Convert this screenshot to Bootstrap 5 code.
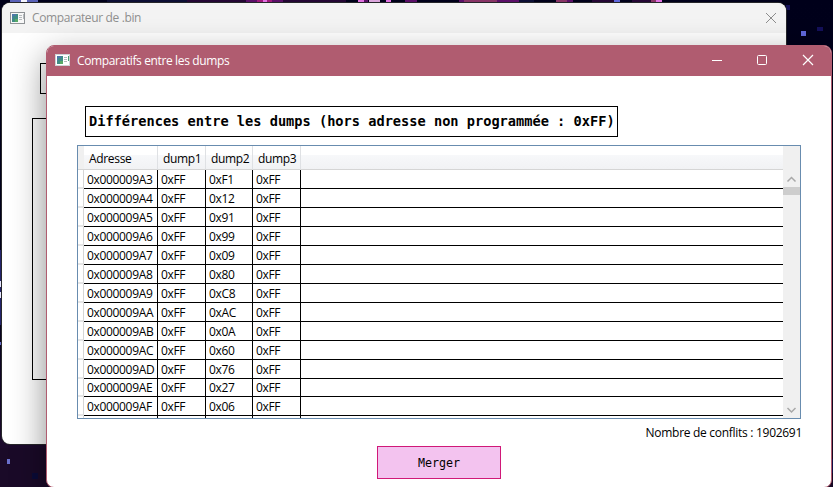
<!DOCTYPE html>
<html lang="fr">

<head>
  <meta charset="UTF-8">
  <meta name="viewport" content="width=device-width, initial-scale=1.0">
  <title>Comparatifs entre les dumps</title>
  <!-- Bootstrap CSS -->
  <link href="https://cdn.jsdelivr.net/npm/bootstrap@5.3.3/dist/css/bootstrap.min.css" rel="stylesheet">
  <!-- Custom CSS -->
  <style>
    body {
      width: 833px;
      height: 487px;
      background: linear-gradient(#00001a 0, #02021c 60%, #1c0a2c 92%);
      color: #000;
      font-family: "Open Sans", "Noto Sans", sans-serif;
      font-size: 12px;
      line-height: 16px;
      letter-spacing: -.33px;
    }

    /* Desktop windows */
    .win {
      border-radius: 8px;
      background: #fff;
    }

    .win-back {
      left: 2px;
      top: 3px;
      width: 784px;
      height: 441px;
      box-shadow: 0 0 0 1px #26262a;
    }

    .win-front {
      left: 46px;
      top: 45px;
      width: 786px;
      height: 443px;
      border: 1px solid #b05c70;
      box-shadow: 0 12px 34px rgba(0, 0, 0, .46);
    }

    .titlebar {
      height: 30px;
      padding-left: 8px;
    }

    .win-back .titlebar {
      background: #f3f3f3;
      color: #8f8f8f;
    }

    .win-front .titlebar {
      background: #b05c70;
      color: #fff;
    }

    .titlebar span {
      margin-left: 7px;
      white-space: nowrap;
    }

    .win-back .titlebar span {
      letter-spacing: -.36px;
    }

    .win-front .titlebar span {
      letter-spacing: -.37px;
    }

    .win-front .app-icon {
      margin-bottom: 2px;
    }

    .win-front .titlebar span {
      margin-left: 7px;
    }

    .ghost-box {
      border: 1px solid #000;
    }

    .heading-box {
      margin: 30px 0 0 38px;
      width: 533px;
      height: 31px;
      padding-left: 3px;
      border: 1px solid #000;
      font: bold 13.65px/29px "DejaVu Sans Mono", monospace;
      letter-spacing: 0;
      white-space: pre;
    }

    /* Data grid */
    .dump-grid {
      margin: 8px 0 0 30px;
      width: 724px;
      height: 274px;
      border: 1px solid #688caf;
    }

    .dump-table {
      width: 705px;
      table-layout: fixed;
      border-collapse: separate;
      border-spacing: 0;
    }

    .dump-table th {
      height: 24px;
      padding: 2px 0 0 5px;
      font-weight: normal;
      background: linear-gradient(#fff 0, #fff 40%, #f7f8fa 41%, #f1f2f4 100%);
      border-right: 1px solid #dfe1e4;
      border-bottom: 1px solid #d5d5d5;
    }

    .dump-table th:first-child {
      background: #f0f0f0;
      border-right: 0;
    }

    .dump-table th:last-child,
    .dump-table td:last-child {
      border-right: 0;
    }

    .dump-table td {
      height: 19px;
      padding: 1px 0 0 3px;
      line-height: 17px;
      border-right: 1px solid #000;
      border-bottom: 1px solid #000;
      white-space: nowrap;
    }

    .dump-table td:first-child {
      padding: 0;
      border-right: 1px solid #d5d5d5;
      border-bottom: 2px solid #e6e6e6;
    }

    .dump-table tr.short td {
      height: 18px;
      padding-top: 0;
    }

    .scroll-col {
      width: 17px;
      background: #f0f0f0;
      padding: 29px 0 4px;
    }

    .thumb {
      height: 8px;
      margin-top: 4px;
      background: #cdcdcd;
    }

    .conflicts {
      margin: 6px 29px 0 0;
      letter-spacing: -.29px;
    }

    .btn-merge {
      width: 124px;
      height: 33px;
      margin: 5px 0 0 330px;
      padding: 1px 0 0;
      border: 1px solid #d01878;
      border-radius: 0;
      background: #f3c3ef;
      color: #000;
      font: 11.67px/30px "DejaVu Sans Mono", monospace;
      letter-spacing: 0;
    }
  </style>
</head>

<body class="position-relative overflow-hidden">

  <!-- Pixel wallpaper -->
  <svg class="position-absolute top-0 start-0" width="833" height="487" shape-rendering="crispEdges">
    <path fill="#5a62b8" d="M10 0h11v3H10zM27 0h11v3H27z" />
    <path fill="#f4f4ff" d="M21 0h6v3h-6z" />
    <path fill="#0c0e34" d="M107 0h80v3h-80zM519 0h15v3h-15z" />
    <path fill="#240634" d="M187 0h59v3h-59zM283 0h63v3h-63zM592 0h22v3h-22zM632 0h20v3h-20z" />
    <path fill="#5b0f68" d="M246 0h37v3h-37zM364 0h4v3h-4zM405 0h12v3h-12zM459 0h60v3h-60zM567 0h6v3h-6z" />
    <path fill="#a0187c" d="M257 0h15v3h-15z" />
    <path fill="#e070e0" d="M263 0h4v3h-4zM358 0h6v3h-6zM386 0h5v3h-5zM656 0h6v3h-6z" />
    <path fill="#dba6dc" d="M369 0h11v3h-11z" />
    <path fill="#883466" d="M464 0h33v3h-33zM556 0h11v3h-11zM651 0h5v3h-5z" />
    <path fill="#6068dc" d="M614 0h6v3h-6zM801 31h5v5h-5z" />
    <path fill="#14105a" d="M817 27h6v4h-6zM786 5h4v5h-4zM832 459h1v14h-1z" />
    <path fill="#24246c" d="M0 250h2v75H0z" />
    <path fill="#e8e8ff" d="M0 281h2v6H0zM0 292h2v6H0z" />
    <path fill="#1a0a28" d="M0 448h47v39H0z" />
    <path fill="#6a70cc" d="M0 342h1v3H0zM7 459h3v5H7z" />
    <path fill="#0b0b38" d="M32 473h6v6h-6z" />
  </svg>

  <!-- Main window, behind -->
  <div class="win win-back position-absolute overflow-hidden">
    <div class="titlebar d-flex align-items-center">
      <svg width="15" height="12" shape-rendering="crispEdges">
        <path fill="#8f9396" d="M0 0h15v12H0z" />
        <path fill="#f8f8f8" d="M1 1h13v10H1z" />
        <path fill="#3f8c84" d="M2 2h6v8H2z" />
        <path fill="#4d78a8" d="M2 2h4v2H2zM2 4h1v3H2z" />
        <path fill="#58a866" d="M5 7h3v3H5z" />
        <path fill="#b5babd" d="M9 3h3v1H9zM9 5h3v1H9zM9 7h3v1H9zM13 2h1v5h-1z" />
      </svg>
      <span>Comparateur de .bin</span>
      <svg class="ms-auto me-2" width="13" height="13" fill="none" stroke="#8c8c8c">
        <path d="M1 1l10 10M11 1l-10 10" />
      </svg>
    </div>
    <div class="ghost-box" style="margin:30px 60px 0 38px;height:31px"></div>
    <div class="ghost-box" style="margin:24px 60px 0 30px;height:262px"></div>
  </div>

  <!-- Comparison window -->
  <div class="win win-front position-absolute overflow-hidden">
    <div class="titlebar d-flex align-items-center">
      <svg class="app-icon" width="15" height="12" shape-rendering="crispEdges">
        <path fill="#cfd3d5" d="M0 0h15v12H0z" />
        <path fill="#fff" d="M1 1h13v10H1z" />
        <path fill="#3f8c84" d="M2 2h6v8H2z" />
        <path fill="#4d78a8" d="M2 2h4v2H2zM2 4h1v3H2z" />
        <path fill="#58a866" d="M5 7h3v3H5z" />
        <path fill="#b5babd" d="M9 3h3v1H9zM9 5h3v1H9zM9 7h3v1H9z" />
        <path fill="#48a070" d="M13 2h1v5h-1z" />
      </svg>
      <span>Comparatifs entre les dumps</span>
      <svg class="ms-auto" width="120" height="30" fill="none" stroke="#fff">
        <path d="M1 14.5h10" />
        <rect x="46.5" y="9.5" width="9" height="9" rx="1" />
        <path stroke-width="1.2" d="M92 9l10 10M102 9l-10 10" />
      </svg>
    </div>

    <div class="heading-box">Différences entre les dumps (hors adresse non programmée : 0xFF)</div>

    <div class="dump-grid d-flex overflow-hidden">
      <table class="dump-table">
        <colgroup>
          <col style="width:6px"><col style="width:74px"><col style="width:48px"><col style="width:47px"><col style="width:48px"><col>
        </colgroup>
        <thead>
          <tr><th></th><th>Adresse</th><th>dump1</th><th>dump2</th><th>dump3</th><th></th></tr>
        </thead>
        <tbody id="rows"></tbody>
      </table>
      <div class="scroll-col d-flex flex-column align-items-stretch">
        <svg width="17" height="8" fill="none" stroke="#a8a8a8" stroke-width="1.5"><path d="M4.5 6.5l4-4 4 4" /></svg>
        <div class="thumb"></div>
        <svg class="mt-auto" width="17" height="8" fill="none" stroke="#a8a8a8" stroke-width="1.5"><path d="M4.5 2l4 4 4-4" /></svg>
      </div>
    </div>

    <div class="conflicts text-end">Nombre de conflits : 1902691</div>
    <button type="button" class="btn btn-merge d-block">Merger</button>
  </div>

  <!-- Bootstrap Bundle with Popper -->
  <script src="https://cdn.jsdelivr.net/npm/bootstrap@5.3.3/dist/js/bootstrap.bundle.min.js"></script>
  <script>
    // second dump value for each address, starting at 0x9A3
    const dump2 = ['F1', '12', '91', '99', '09', '80', 'C8', 'AC', '0A', '60', '76', '27', '06', ''];
    const tbody = document.getElementById('rows');

    dump2.forEach((value, i) => {
      const tr = document.createElement('tr');
      if (i === 11) tr.className = 'short';
      const address = '0x' + (0x9A3 + i).toString(16).toUpperCase().padStart(8, '0');
      const cells = value ? ['', address, '0xFF', '0x' + value, '0xFF', ''] : ['', '', '', '', '', ''];
      cells.forEach(text => {
        const td = document.createElement('td');
        td.textContent = text;
        tr.appendChild(td);
      });
      tbody.appendChild(tr);
    });
  </script>
</body>

</html>
